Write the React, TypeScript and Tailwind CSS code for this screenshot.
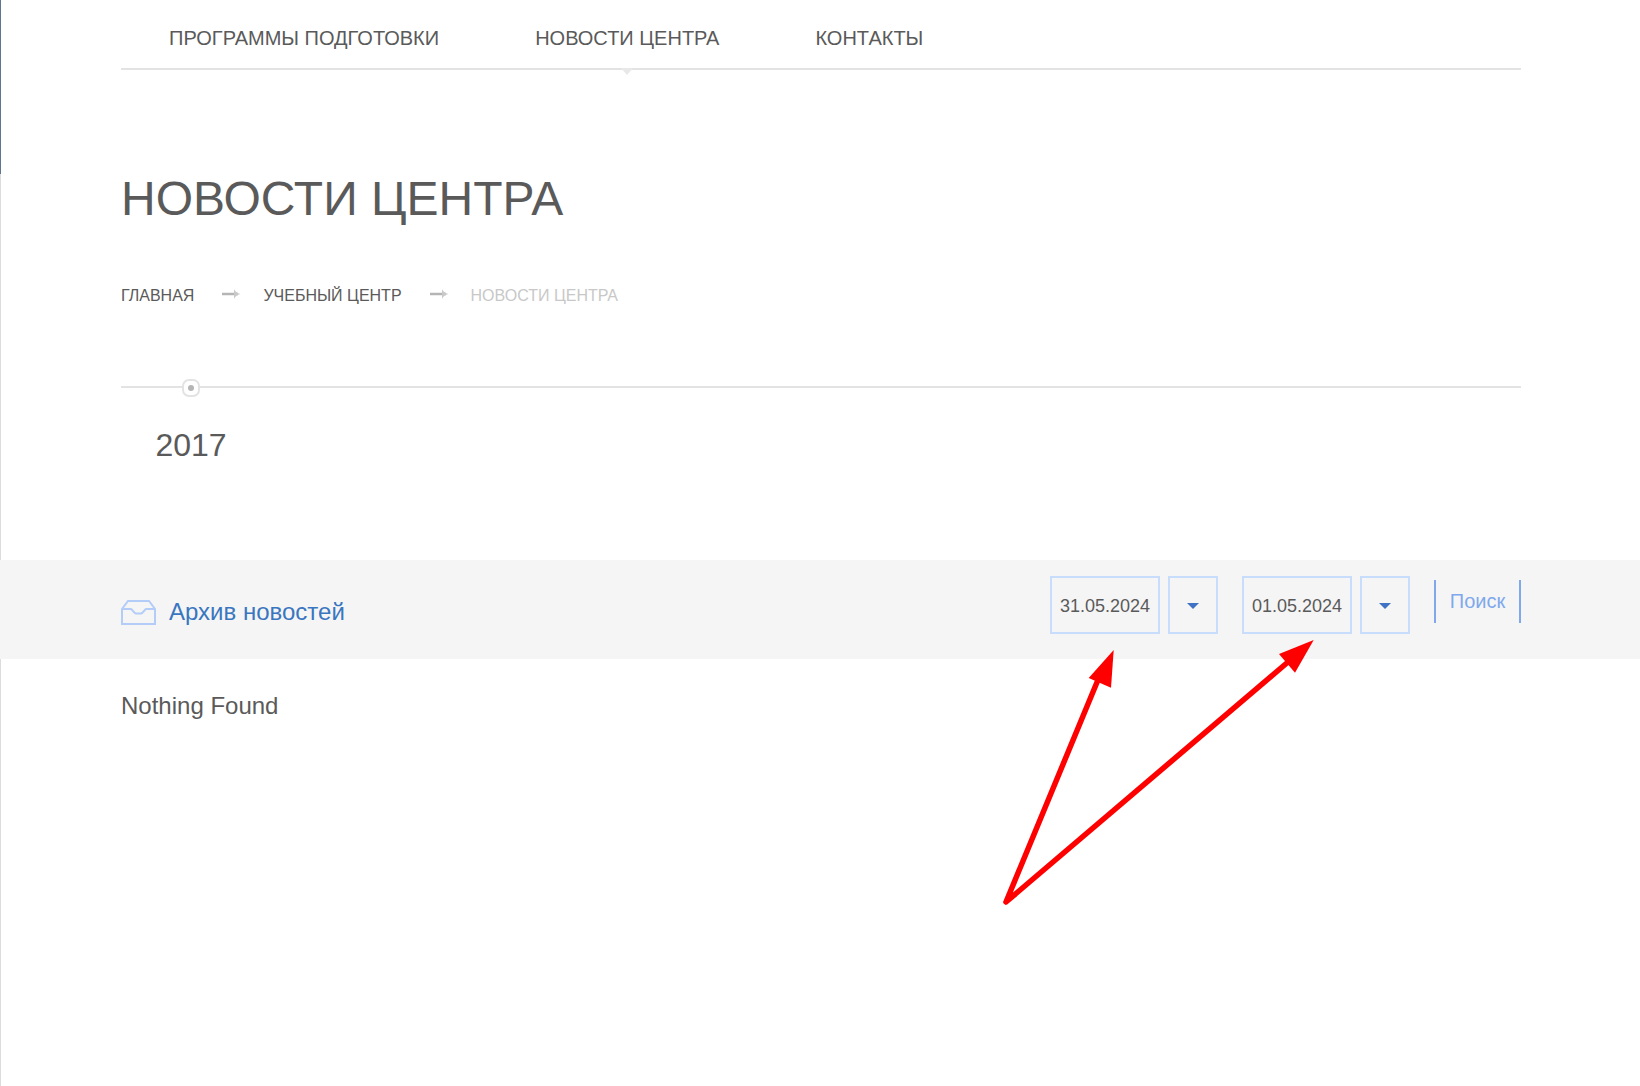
import React from "react";

const font = "font-['Liberation_Sans',Arial,sans-serif]";

const NavLink = ({ label }: { label: string }) => (
  <a className="text-[20px] leading-[24px] text-[#5a5a5a]">{label}</a>
);

const Arrow = () => (
  <svg width="19" height="12" viewBox="0 0 19 12" className="ml-[28px] mr-[22px] -translate-y-[2px]">
    <path d="M0 6h16" stroke="#b5b5b5" strokeWidth="2.500" />
    <path d="M12 1c1 2.500 3 4 6.500 5-3.500 1-5.500 2.500-6.500 5z" fill="#c9c9c9" />
  </svg>
);

const InboxIcon = () => (
  <svg width="35" height="25" viewBox="0 0 35 25" fill="none" stroke="#b4cdf8" strokeWidth="2">
    <path d="M1 9 7 1h21l6 8v15H1z" />
    <path d="M1 9h9c1 0 3 4.500 5 4.500h5c2 0 4-4.500 5-4.500h9" />
  </svg>
);

const DateField = ({ value }: { value: string }) => (
  <div className="flex gap-[8px]">
    <div className="flex h-[58px] w-[110px] items-center justify-center border-2 border-[#c8dcfb] pt-[3px] text-[18px] text-[#5a5a5a]">
      {value}
    </div>
    <div className="flex h-[58px] w-[50px] items-center justify-center border-2 border-[#c8dcfb] pt-[2px]">
      <div className="h-0 w-0 border-x-[6px] border-t-[6px] border-x-transparent border-t-[#3f72c4]" />
    </div>
  </div>
);

const RedArrows = () => (
  <svg className="absolute left-0 top-0 pointer-events-none" width="1640" height="1086" fill="none">
    <path d="M1006 902 1100 675M1006 902 1288 662" stroke="#ff0000" strokeWidth="5.500" strokeLinecap="round" />
    <path d="M1113.700 650 1088.700 678 1111 687.700z" fill="#ff0000" />
    <path d="M1313.700 640 1279 654 1295 672.700z" fill="#ff0000" />
  </svg>
);

export default function App() {
  return (
    <div className={`${font} relative h-[1086px] overflow-hidden bg-white`}>
      <div className="absolute left-0 top-0 h-[174px] w-[1px] bg-[#5f7590]" />
      <div className="absolute left-0 top-[174px] h-[386px] w-[1px] bg-[#dcdcdc]" />
      <div className="absolute left-0 top-[659px] h-[427px] w-[1px] bg-[#dcdcdc]" />

      <div className="ml-[121px] w-[1400px]">
        <nav className="relative flex h-[70px] gap-[96px] border-b-2 border-[#e3e3e3] pl-[48px] pt-[26px]">
          <NavLink label="ПРОГРАММЫ ПОДГОТОВКИ" />
          <NavLink label="НОВОСТИ ЦЕНТРА" />
          <NavLink label="КОНТАКТЫ" />
          <div className="absolute left-[500px] top-[68px] h-0 w-0 border-x-[6px] border-t-[7px] border-x-transparent border-t-[#e8e8e8]" />
        </nav>

        <h1 className="mt-[99px] text-[48px] leading-[60px] text-[#5a5a5a]">НОВОСТИ ЦЕНТРА</h1>

        <div className="mt-[57px] flex items-center text-[16px] leading-[20px]">
          <span className="text-[#5a5a5a]">ГЛАВНАЯ</span>
          <Arrow />
          <span className="text-[#5a5a5a]">УЧЕБНЫЙ ЦЕНТР</span>
          <Arrow />
          <span className="text-[#c8c8c8]">НОВОСТИ ЦЕНТРА</span>
        </div>

        <div className="relative mt-[80px] h-[2px] bg-[#e3e3e3]">
          <div className="absolute left-[61px] top-[-7px] flex h-[18px] w-[18px] items-center justify-center rounded-[7px] border-2 border-[#e3e3e3] bg-white">
            <div className="h-[6px] w-[6px] rounded-full bg-[#b5b5b5]" />
          </div>
        </div>

        <div className="mt-[38px] w-[140px] text-center text-[32px] leading-[38px] text-[#5a5a5a]">2017</div>
      </div>

      <div className="mt-[96px] h-[99px] bg-[#f5f5f5]">
        <div className="ml-[121px] flex h-full w-[1400px] items-start">
          <div className="mt-[38px] flex items-center gap-[13px]">
            <InboxIcon />
            <span className="text-[24px] leading-[28px] text-[#3a76c0]">Архив новостей</span>
          </div>
          <div className="ml-auto mt-[16px] flex items-start">
            <DateField value="31.05.2024" />
            <div className="w-[24px]" />
            <DateField value="01.05.2024" />
            <a className="ml-[24px] mt-[4px] flex h-[43px] w-[87px] items-center justify-center border-x-2 border-[#7fa9ec] pb-[2px] text-[20px] text-[#7fa9ec]">
              Поиск
            </a>
          </div>
        </div>
      </div>

      <div className="ml-[121px] mt-[33px] text-[24px] leading-[28px] text-[#5a5a5a]">Nothing Found</div>

      <RedArrows />
    </div>
  );
}
